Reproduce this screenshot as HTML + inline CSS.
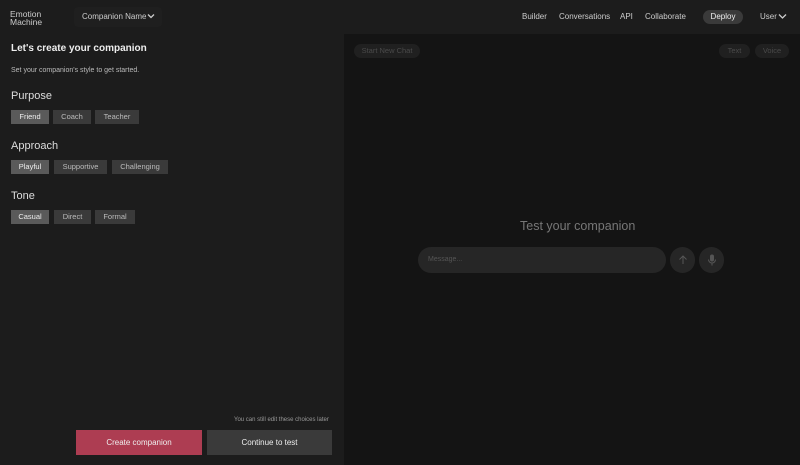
<!DOCTYPE html>
<html><head><meta charset="utf-8"><style>
*{margin:0;padding:0;box-sizing:border-box}
body{width:800px;height:465px;background:#1c1c1c;font-family:"Liberation Sans",sans-serif;color:#ddd;position:relative;overflow:hidden}
.a{position:absolute}
.top{left:0;top:0;width:800px;height:34px;background:#1c1c1c}
.logo{left:10px;top:10px;font-size:8.5px;line-height:8px;color:#ccc}
.cn{left:74px;top:7px;width:88px;height:20px;background:#1f1f1f;border-radius:4px}
.nav{top:12px;font-size:8px;color:#ccc;white-space:nowrap}
.deploy{left:703px;top:10px;width:40px;height:14px;background:#3a3a3a;border-radius:7px;font-size:8px;color:#eee;text-align:center;line-height:14px}
.right{left:344px;top:34px;width:456px;height:431px;background:#141414}
h1{position:absolute;left:11px;top:43px;font-size:10px;font-weight:bold;color:#eee}
.sub{left:11px;top:67px;font-size:7px;color:#bbb}
.h{font-size:11px;color:#ddd;left:11px}
.chip{position:absolute;height:14px;background:#3a3a3a;font-size:7.5px;color:#bbb;text-align:center;line-height:14px}
.chip.on{background:#5a5a5a;color:#eee}
.pill{position:absolute;height:14px;background:#202020;border-radius:7px;font-size:7.5px;color:#4a4a4a;text-align:center;line-height:14px}
</style></head><body>
<div class="a top"></div>
<div class="a logo">Emotion<br>Machine</div>
<div class="a cn"></div>
<div class="a nav" style="left:82px">Companion Name</div>
<svg class="a" style="left:147px;top:13px" width="8" height="6" viewBox="0 0 8 6"><path d="M1 1.5l3 3 3-3" stroke="#ccc" stroke-width="1.3" fill="none"/></svg>
<div class="a nav" style="left:522px">Builder</div>
<div class="a nav" style="left:559px">Conversations</div>
<div class="a nav" style="left:620px">API</div>
<div class="a nav" style="left:645px">Collaborate</div>
<div class="a deploy">Deploy</div>
<div class="a nav" style="left:760px">User</div>
<svg class="a" style="left:778px;top:13px" width="9" height="7" viewBox="0 0 9 7"><path d="M1 1.5l3.5 3.5 3.5-3.5" stroke="#ccc" stroke-width="1.3" fill="none"/></svg>
<div class="a right"></div>
<h1>Let's create your companion</h1>
<div class="a sub">Set your companion's style to get started.</div>
<div class="a h" style="top:90px">Purpose</div>
<div class="chip on" style="left:11px;top:110px;width:38px">Friend</div>
<div class="chip" style="left:53px;top:110px;width:38px">Coach</div>
<div class="chip" style="left:95px;top:110px;width:44px">Teacher</div>
<div class="a h" style="top:140px">Approach</div>
<div class="chip on" style="left:11px;top:160px;width:38px">Playful</div>
<div class="chip" style="left:54px;top:160px;width:53px">Supportive</div>
<div class="chip" style="left:112px;top:160px;width:56px">Challenging</div>
<div class="a h" style="top:190px">Tone</div>
<div class="chip on" style="left:11px;top:210px;width:38px">Casual</div>
<div class="chip" style="left:54px;top:210px;width:37px">Direct</div>
<div class="chip" style="left:95px;top:210px;width:40px">Formal</div>
<div class="a" style="left:234px;top:417px;font-size:6px;color:#999">You can still edit these choices later</div>
<div class="a" style="left:76px;top:430px;width:126px;height:25px;background:#ad3d52;color:#eee;font-size:8px;text-align:center;line-height:25px">Create companion</div>
<div class="a" style="left:207px;top:430px;width:125px;height:25px;background:#3a3a3a;color:#eee;font-size:8px;text-align:center;line-height:25px">Continue to test</div>
<div class="pill" style="left:354px;top:44px;width:66px">Start New Chat</div>
<div class="pill" style="left:719px;top:44px;width:31px">Text</div>
<div class="pill" style="left:755px;top:44px;width:34px">Voice</div>
<div class="a" style="left:520px;top:219px;font-size:12.5px;color:#777">Test your companion</div>
<div class="a" style="left:418px;top:247px;width:248px;height:26px;background:#262626;border-radius:13px;font-size:7px;color:#555;padding:9px 10px">Message...</div>
<div class="a" style="left:670px;top:247px;width:25px;height:26px;background:#262626;border-radius:13px"></div>
<svg class="a" style="left:678px;top:255px" width="10" height="10" viewBox="0 0 10 10"><path d="M5 9V1M1.5 4.5L5 1l3.5 3.5" stroke="#555" stroke-width="1" fill="none"/></svg>
<div class="a" style="left:699px;top:247px;width:25px;height:26px;background:#262626;border-radius:13px"></div>
<svg class="a" style="left:707px;top:254px" width="10" height="12" viewBox="0 0 10 12"><rect x="3" y="0.5" width="4" height="7" rx="2" fill="#555"/><path d="M1.5 5.5a3.5 3.5 0 0 0 7 0M5 9v2.5" stroke="#555" stroke-width="1" fill="none"/></svg>
</body></html>
